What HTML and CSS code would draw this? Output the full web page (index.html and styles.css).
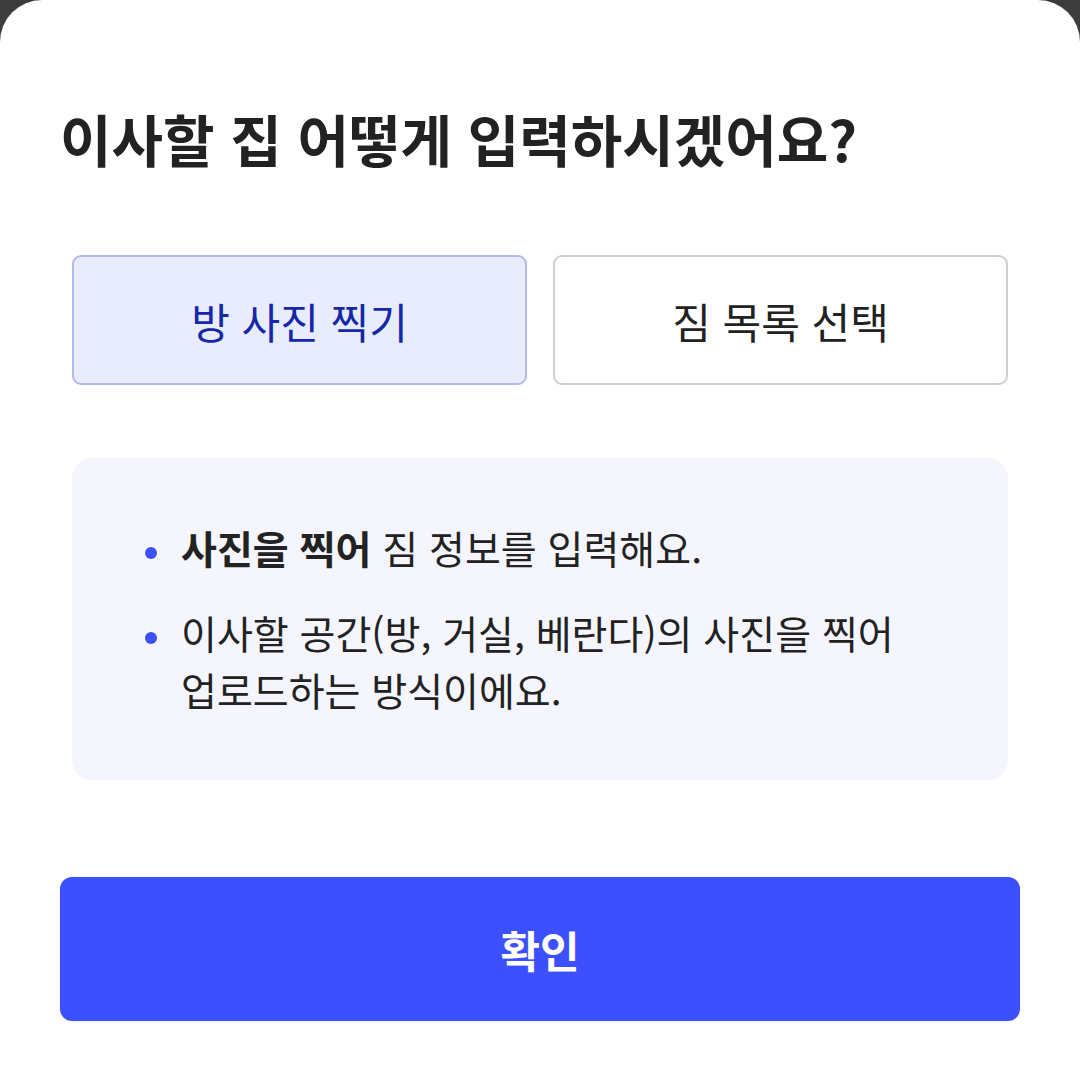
FILE: index.html
```html
<!DOCTYPE html>
<html lang="ko">
<head>
  <meta charset="UTF-8" />
  <meta name="viewport" content="width=device-width, initial-scale=1.0"/>
  <title>이사할 집 입력</title>
  <link rel="stylesheet" href="styles.css">
</head>
<body>

  <div class="sheet">
    <h2 class="title">이사할 집 어떻게 입력하시겠어요?</h2>

    <div class="options">
      <div class="option selected">방 사진 찍기</div>
      <div class="option">짐 목록 선택</div>
    </div>

    <!-- 안내 박스 -->
    <div class="info">
      <ul>
        <li><b>사진을 찍어</b> 짐 정보를 입력해요.</li>
        <li>이사할 공간(방, 거실, 베란다)의 사진을 찍어<br>업로드하는 방식이에요.</li>
      </ul>
    </div>

    <button class="confirm">확인</button>
  </div>

</body>
</html>
```

FILE: styles.css
```css
* { box-sizing: border-box; margin: 0; padding: 0; }
body {
  font-family: "Noto Sans CJK KR", "Noto Sans", sans-serif;
  background-color: #3c3c3c;
  overflow: hidden;
}

.sheet {
  background-color: white;
  border-radius: 42px 42px 0 0;
  min-height: 100vh;
  padding: 102px 60px 0;
}

.title {
  font-size: 56px; font-weight: bold;
  color: #222; line-height: 72px;
}

.options {
  display: grid; grid-template-columns: 1fr 1fr;
  gap: 26px; margin: 81px 12px 0;
}

.option {
  height: 130px; border: 2px solid #cdcfd2;
  border-radius: 9px;
  display: flex; align-items: center; justify-content: center;
  font-size: 42px; color: #222;
}

.option.selected {
  background-color: #e9ecfd; border-color: #b1baee;
  color: #1428a8;
}

.info {
  margin: 73px 12px 0;
  background-color: #f5f6fd;
  border-radius: 20px;
  padding: 61px 30px 62px 70px;
}

.info ul { list-style: none; }

.info li {
  position: relative; padding-left: 39px;
  font-size: 39px; line-height: 57px; color: #222;
}

.info li + li { margin-top: 28px; }

.info li::before {
  content: ""; position: absolute;
  left: 3px; top: 28px;
  width: 12px; height: 12px; border-radius: 50%;
  background-color: #3d50f5;
}

.info b { font-weight: bold; }

.confirm {
  display: block; width: 100%;
  margin-top: 97px; height: 144px;
  border: none; border-radius: 12px;
  background-color: #3d50ff; color: white;
  font-family: inherit; font-size: 43px; font-weight: bold;
}
```
